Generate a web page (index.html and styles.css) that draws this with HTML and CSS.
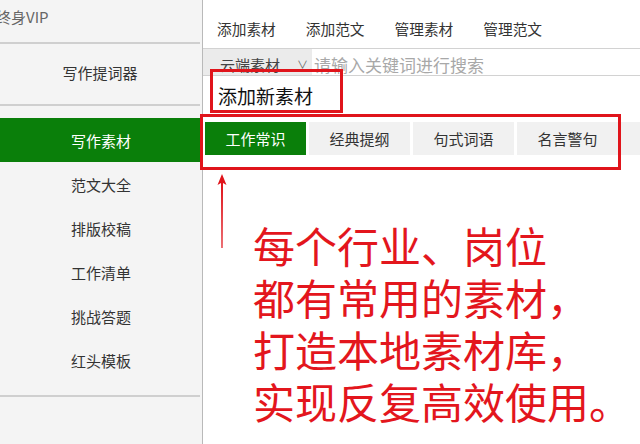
FILE: index.html
```html
<!DOCTYPE html>
<html lang="zh-CN">
<head>
<meta charset="utf-8">
<link rel="stylesheet" href="styles.css">
</head>
<body>
<div class="app">
  <aside class="sidebar">
    <div class="vip"><span class="vip-text">终身VIP</span></div>
    <div class="prompter">写作提词器</div>
    <ul class="menu">
      <li class="item active">写作素材</li>
      <li class="item">范文大全</li>
      <li class="item">排版校稿</li>
      <li class="item">工作清单</li>
      <li class="item">挑战答题</li>
      <li class="item">红头模板</li>
    </ul>
    <div class="menu-end"></div>
  </aside>
  <main class="main">
    <nav class="topnav">
      <span class="nav-link">添加素材</span>
      <span class="nav-link">添加范文</span>
      <span class="nav-link">管理素材</span>
      <span class="nav-link">管理范文</span>
    </nav>
    <div class="search">
      <div class="scope"><span>云端素材</span><span class="caret">∨</span></div>
      <div class="input">请输入关键词进行搜索</div>
    </div>
    <div class="add-title">添加新素材</div>
    <div class="tabs">
      <span class="tab active">工作常识</span>
      <span class="tab">经典提纲</span>
      <span class="tab">句式词语</span>
      <span class="tab">名言警句</span>
      <span class="tab-fill"></span>
    </div>
    <div class="note">
      <p>每个行业、岗位</p>
      <p>都有常用的素材，</p>
      <p>打造本地素材库，</p>
      <p>实现反复高效使用。</p>
    </div>
  </main>
  <div class="mark mark-title"></div>
  <div class="mark mark-tabs"></div>
  <svg class="arrow" width="12" height="76" viewBox="0 0 12 76">
    <path d="M6 0 L10.5 11 L7 9 L6.6 74 L5.4 74 L5 9 L1.5 11 Z" fill="#e0141b"/>
  </svg>
</div>
</body>
</html>
```
FILE: styles.css
```css
* { box-sizing: border-box; }
html, body {
  margin: 0;
  padding: 0;
  width: 640px;
  height: 444px;
  overflow: hidden;
  background: #fff;
  font-family: "Noto Sans CJK SC", "Noto Sans", sans-serif;
  color: #333;
}
.app {
  position: relative;
  display: flex;
  width: 640px;
  height: 444px;
}
.sidebar {
  width: 203px;
  flex: none;
  background: #f4f4f4;
  border-right: 1px solid #b9b9b9;
  display: flex;
  flex-direction: column;
}
.vip {
  height: 44px;
  margin-right: 2px;
  border-bottom: 2px solid #cfcfcf;
  font-size: 15px;
  line-height: 20px;
  padding-top: 7px;
  color: #666;
  overflow: hidden;
}
.vip-text { display: block; margin-left: -4px; }
.prompter {
  height: 62px;
  margin-right: 2px;
  border-bottom: 2px solid #cfcfcf;
  display: flex;
  align-items: center;
  justify-content: center;
  font-size: 15px;
  color: #333;
  padding-bottom: 3px;
}
.menu {
  list-style: none;
  margin: 12px 0 0;
  padding: 0;
}
.item {
  height: 44px;
  display: flex;
  align-items: center;
  justify-content: center;
  font-size: 15px;
  color: #333;
}
.item.active {
  background: #0a7f0a;
  color: #fff;
}
.menu-end {
  margin-top: 13px;
  margin-right: 2px;
  border-bottom: 2px solid #cfcfcf;
}
.main {
  flex: 1;
  display: flex;
  flex-direction: column;
  min-width: 0;
}
.topnav {
  height: 48px;
  padding: 20px 0 0 14px;
  display: flex;
  gap: 30px;
  font-size: 14.7px;
  line-height: 18px;
  color: #333;
}
.search {
  height: 28px;
  border-top: 1px solid #d2d2d2;
  border-bottom: 1px solid #d2d2d2;
  display: flex;
  align-items: stretch;
}
.scope {
  width: 109px;
  background: #ebebeb;
  padding: 4px 0 0 17px;
  display: flex;
  align-items: center;
  font-size: 15px;
  color: #444;
}
.caret {
  margin-left: 17px;
  font-size: 11px;
  color: #666;
}
.input {
  padding: 4px 0 0 2px;
  display: flex;
  align-items: center;
  font-size: 17px;
  color: #a8a8a8;
}
.add-title {
  height: 46px;
  padding: 8px 0 0 15px;
  font-size: 19px;
  line-height: 24px;
  color: #111;
}
.tabs {
  height: 33px;
  display: flex;
  gap: 3px;
  padding-left: 2px;
}
.tab {
  width: 101px;
  flex: none;
  background: #f1f1f1;
  display: flex;
  align-items: center;
  justify-content: center;
  font-size: 15px;
  color: #333;
}
.tab.active {
  background: #0a7f0a;
  color: #fff;
}
.tab-fill {
  flex: 1;
  background: #f1f1f1;
}
.note {
  margin-top: 64px;
  padding-left: 50px;
  color: #e3161d;
  font-size: 42px;
  line-height: 52px;
}
.note p { margin: 0; white-space: nowrap; }
.mark {
  position: absolute;
  border: 3px solid #e0141b;
}
.mark-title {
  left: 210px;
  top: 69px;
  width: 133px;
  height: 44px;
}
.mark-tabs {
  left: 200px;
  top: 114px;
  width: 421px;
  height: 56px;
}
.arrow {
  position: absolute;
  left: 216px;
  top: 174px;
}
```
